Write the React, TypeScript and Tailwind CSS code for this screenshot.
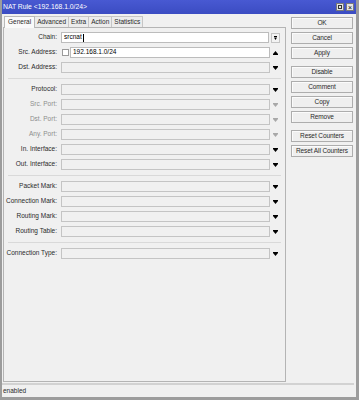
import React from 'react';

type Kind = 'combo' | 'check' | 'plain';

interface Field {
  label: string;
  kind: Kind;
  value?: string;
  dim?: boolean;
  up?: boolean;
}

const groups: Field[][] = [
  [
    { label: 'Chain:', kind: 'combo', value: 'srcnat' },
    { label: 'Src. Address:', kind: 'check', value: '192.168.1.0/24', up: true },
    { label: 'Dst. Address:', kind: 'plain' },
  ],
  [
    { label: 'Protocol:', kind: 'plain' },
    { label: 'Src. Port:', kind: 'plain', dim: true },
    { label: 'Dst. Port:', kind: 'plain', dim: true },
    { label: 'Any. Port:', kind: 'plain', dim: true },
    { label: 'In. Interface:', kind: 'plain' },
    { label: 'Out. Interface:', kind: 'plain' },
  ],
  [
    { label: 'Packet Mark:', kind: 'plain' },
    { label: 'Connection Mark:', kind: 'plain' },
    { label: 'Routing Mark:', kind: 'plain' },
    { label: 'Routing Table:', kind: 'plain' },
  ],
  [{ label: 'Connection Type:', kind: 'plain' }],
];

const tabs = ['General', 'Advanced', 'Extra', 'Action', 'Statistics'];

function Arrow({ up, dim }: { up?: boolean; dim?: boolean }) {
  return (
    <svg width="5" height="4" viewBox="0 0 5 4" className={dim ? 'text-[#a8a8a8]' : 'text-black'}>
      {up ? (
        <>
          <path d="M2.5 0L5 3H0z" fill="currentColor" />
          <rect x="0" y="3" width="5" height="1" fill="currentColor" />
        </>
      ) : (
        <>
          <rect x="0" y="0" width="5" height="1" fill="currentColor" />
          <path d="M0 1h5L2.5 4z" fill="currentColor" />
        </>
      )}
    </svg>
  );
}

function FormRow({ f }: { f: Field }) {
  return (
    <div className="flex items-center h-[11px]">
      <div className={`w-[53px] text-right whitespace-nowrap ${f.dim ? 'text-[#8d8d8d]' : 'text-[#2a2a2a]'}`}>
        {f.label}
      </div>
      {f.kind === 'combo' && (
        <>
          <div className="ml-[4px] w-[208px] h-[11px] bg-white border border-[#bcbcbc] flex items-center pl-[2px]">
            {f.value}
            <span className="w-px h-[8px] bg-black ml-px" />
          </div>
          <div className="ml-[2px] w-[9px] h-[10px] border border-[#c4c4c4] bg-[#f3f3f3] flex items-center justify-center">
            <svg width="3" height="4" viewBox="0 0 3 4" className="text-black">
              <rect x="0" y="0" width="3" height="1" fill="currentColor" />
              <path d="M0 1.5h3L1.5 4z" fill="currentColor" />
            </svg>
          </div>
        </>
      )}
      {f.kind === 'check' && (
        <>
          <div className="ml-[5px] w-[7px] h-[7px] bg-white border border-[#9a9a9a]" />
          <div className="ml-[1px] w-[200px] h-[11px] bg-white border border-[#bcbcbc] flex items-center pl-[2px]">
            {f.value}
          </div>
          <div className="ml-[3px]">
            <Arrow up={f.up} />
          </div>
        </>
      )}
      {f.kind === 'plain' && (
        <>
          <div className="ml-[4px] w-[209px] h-[11px] bg-[#f0f0f0] border border-[#c4c4c4]" />
          <div className="ml-[3px]">
            <Arrow dim={f.dim} />
          </div>
        </>
      )}
    </div>
  );
}

function Btn({ label, className = '' }: { label: string; className?: string }) {
  return (
    <div
      className={`w-[62px] h-[12px] border border-[#adadad] bg-[#efefef] shadow-[inset_1px_1px_0_#fbfbfb] flex items-center justify-center text-[#2a2a2a] whitespace-nowrap tracking-[-0.1px] ${className}`}
    >
      {label}
    </div>
  );
}

export default function App() {
  return (
    <div className="w-[359px] h-[400px] overflow-hidden bg-[#f0f0f0] border-l-2 border-r-[3px] border-b-[3px] border-[#9c9c9c] font-['Liberation_Sans',Arial,sans-serif] text-[6.5px] leading-none flex flex-col">
      {/* Title bar */}
      <div className="h-[14px] -ml-[2px] -mr-[3px] bg-gradient-to-b from-[#4859d2] to-[#3b4cc2] flex items-center justify-between pl-[3px] pr-[5px] text-white shrink-0">
        <span className="text-[6.8px]">NAT Rule &lt;192.168.1.0/24&gt;</span>
        <div className="flex gap-[2px]">
          <div className="w-[8px] h-[8px] bg-[#e4e4e4] border border-[#7a7a7a] flex items-center justify-center">
            <div className="w-[4px] h-[4px] border border-[#333]" />
          </div>
          <div className="w-[8px] h-[8px] bg-[#e4e4e4] border border-[#7a7a7a] flex items-center justify-center text-black text-[7px] leading-none">
            ×
          </div>
        </div>
      </div>

      {/* Body */}
      <div className="flex h-[369px] shrink-0">
        <div className="w-[284px] pl-[1px] pt-[1px] flex flex-col">
          {/* Tabs */}
          <div className="flex h-[12px] pl-[1px] items-end">
            {tabs.map((t, i) => (
              <div
                key={t}
                className={
                  i === 0
                    ? 'h-[12px] px-[3px] flex items-center bg-[#fafafa] border border-b-0 border-[#b9b9b9] text-[#2a2a2a] relative top-px z-10'
                    : 'h-[11px] px-[2px] flex items-center bg-[#ececec] border border-b-0 border-l-0 border-[#c6c6c6] text-[#2a2a2a]'
                }
              >
                {t}
              </div>
            ))}
          </div>
          {/* Panel */}
          <div className="h-[355px] border border-[#b4b4b4] bg-[#f0f0f0] pt-[4px] flex flex-col gap-[4px]">
            {groups.map((g, gi) => (
              <React.Fragment key={gi}>
                {gi > 0 && (
                  <div className="h-[3px] flex items-start pt-px pl-[4px] pr-[4px]">
                    <div className="h-px w-full bg-[#d9d9d9]" />
                  </div>
                )}
                {g.map((f) => (
                  <FormRow key={f.label} f={f} />
                ))}
              </React.Fragment>
            ))}
          </div>
        </div>

        {/* Buttons */}
        <div className="ml-[5px] pt-[3px] flex flex-col gap-[3px]">
          <Btn label="OK" />
          <Btn label="Cancel" />
          <Btn label="Apply" />
          <Btn label="Disable" className="mt-[4px]" />
          <Btn label="Comment" />
          <Btn label="Copy" />
          <Btn label="Remove" />
          <Btn label="Reset Counters" className="mt-[4px]" />
          <Btn label="Reset All Counters" />
        </div>
      </div>

      {/* Status */}
      <div className="h-[2px] mr-[2px] bg-[#d2d2d2] shrink-0" />
      <div className="h-[12px] flex items-center pl-[1px] text-[#2a2a2a] shrink-0">enabled</div>
    </div>
  );
}
